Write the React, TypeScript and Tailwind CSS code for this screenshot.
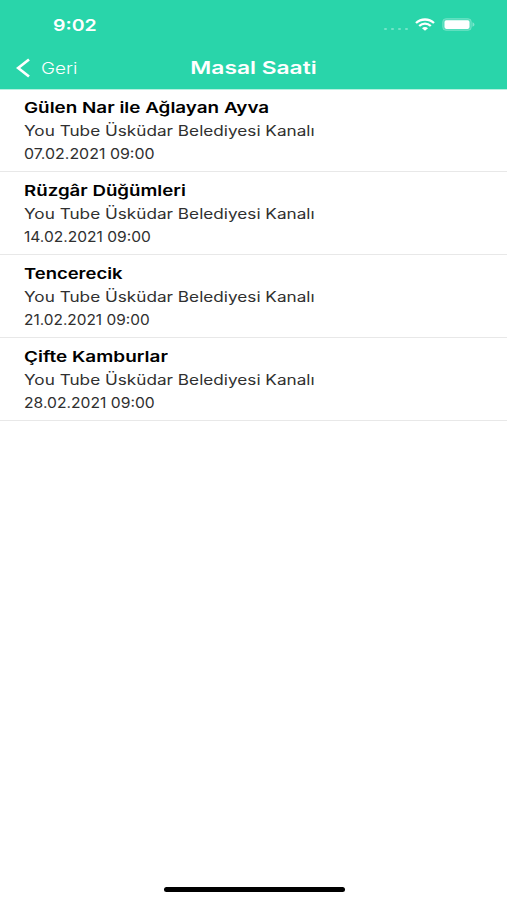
type Story = {
  title: string;
  date: string;
  titleClass: string;
  dateClass: string;
};

const CHANNEL = "You Tube Üsküdar Belediyesi Kanalı";

const stories: Story[] = [
  { title: "Gülen Nar ile Ağlayan Ayva", date: "07.02.2021 09:00", titleClass: "scale-x-[1.257]", dateClass: "scale-x-[1.14]" },
  { title: "Rüzgâr Düğümleri", date: "14.02.2021 09:00", titleClass: "scale-x-[1.246]", dateClass: "scale-x-[1.112]" },
  { title: "Tencerecik", date: "21.02.2021 09:00", titleClass: "scale-x-[1.23]", dateClass: "scale-x-[1.102]" },
  { title: "Çifte Kamburlar", date: "28.02.2021 09:00", titleClass: "scale-x-[1.263]", dateClass: "scale-x-[1.12]" },
];

function StatusBar() {
  return (
    <div className="flex h-[46px] items-center justify-between pt-[3px] pr-[32px] pl-[53px]">
      <span className="origin-left scale-x-[1.22] text-[16px] leading-none font-semibold">9:02</span>
      <div className="flex items-center">
        <div className="mt-[9px] mr-[7px] flex gap-[4px]">
          <span className="h-[2px] w-[3px] rounded-full bg-white/35" />
          <span className="h-[2px] w-[3px] rounded-full bg-white/35" />
          <span className="h-[2px] w-[3px] rounded-full bg-white/35" />
          <span className="h-[2px] w-[3px] rounded-full bg-white/35" />
        </div>
        <svg className="mr-[7px] h-[13px] w-[20px]" viewBox="0 0 20 13" fill="none" stroke="white" strokeWidth="2.3">
          <path d="M1 5C6 .3 14 .3 19 5" />
          <path d="M4.2 8C7.5 4.9 12.5 4.9 15.8 8" />
          <path d="M7 10.2c1.8-1.6 4.2-1.6 6 0L10 12.8z" fill="white" stroke="none" />
        </svg>
        <svg className="h-[13px] w-[33px]" viewBox="0 0 33 13">
          <rect x=".6" y=".6" width="28.8" height="11.8" rx="3.5" fill="white" fillOpacity=".2" stroke="white" strokeOpacity=".2" />
          <rect x="2.5" y="2.3" width="25" height="8.6" rx="1.8" fill="white" />
          <path d="M30.5 4.2c2.6 1 2.6 3.6 0 4.6z" fill="white" fillOpacity=".4" />
        </svg>
      </div>
    </div>
  );
}

function NavBar() {
  return (
    <div className="grid h-[43px] grid-cols-3 items-center">
      <div className="flex items-center pl-[16px]">
        <svg className="h-[20px] w-[14px]" viewBox="0 0 14 20" fill="none" stroke="white" strokeWidth="2.7">
          <path d="M13 1.5 2.2 10 13 18.5" />
        </svg>
        <span className="ml-[10.5px] origin-left scale-x-[1.18] text-[16px] leading-none font-light">Geri</span>
      </div>
      <h1 className="scale-x-[1.34] pt-[2px] text-center text-[17px] leading-none font-semibold whitespace-nowrap">Masal Saati</h1>
    </div>
  );
}

function StoryRow({ story }: { story: Story }) {
  return (
    <li className="flex h-[83px] flex-col items-start border-b border-[#e8e8e8] pt-[6.5px] pl-[24.4px] whitespace-nowrap">
      <h2 className={`origin-left text-[15px] leading-[23.5px] font-semibold text-black ${story.titleClass}`}>{story.title}</h2>
      <p className="origin-left scale-x-[1.227] text-[14px] leading-[23px] text-[#303030]">{CHANNEL}</p>
      <p className={`origin-left text-[14px] leading-[23px] text-[#303030] ${story.dateClass}`}>{story.date}</p>
    </li>
  );
}

export default function App() {
  return (
    <div className="flex h-[900px] w-[507px] flex-col overflow-hidden bg-white font-['Inter','Noto_Sans',sans-serif]">
      <header className="h-[89px] shrink-0 bg-[#29d5aa] text-white">
        <StatusBar />
        <NavBar />
      </header>
      <ul className="shadow-[inset_0_1px_0_#b5f1e0]">
        {stories.map((story) => (
          <StoryRow key={story.date} story={story} />
        ))}
      </ul>
      <div className="mt-auto mb-[8px] ml-[164px] h-[5px] w-[181px] rounded-full bg-black" />
    </div>
  );
}
